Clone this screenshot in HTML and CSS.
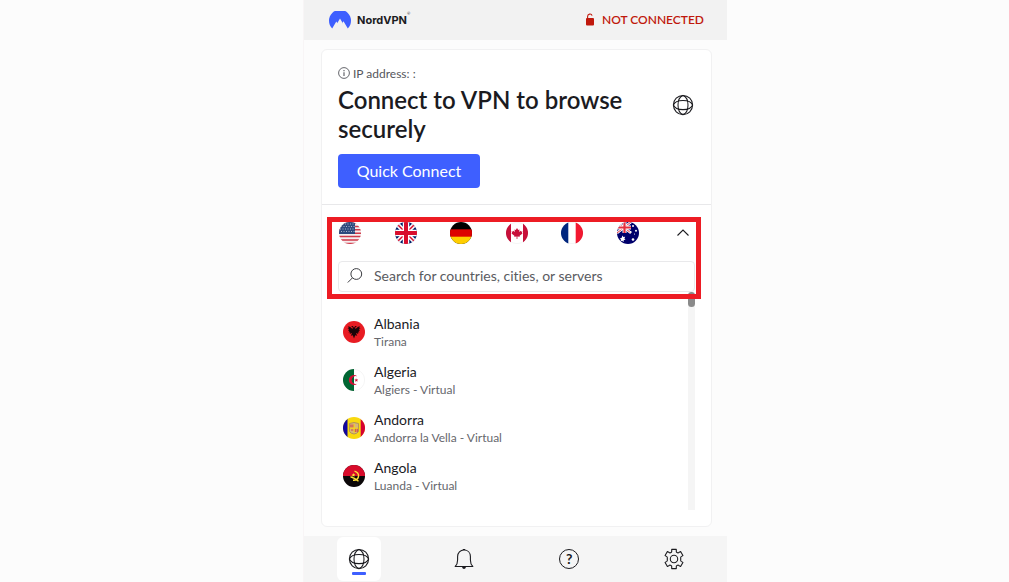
FILE: index.html
```html
<!DOCTYPE html>
<html lang="en">
<head>
<meta charset="utf-8">
<meta name="viewport" content="width=device-width, initial-scale=1">
<title>NordVPN</title>
<link rel="stylesheet" href="styles.css">
</head>
<body>
<svg class="defs" width="0" height="0" aria-hidden="true">
  <defs>
    <clipPath id="round"><circle cx="11" cy="11" r="11"/></clipPath>
    <symbol id="globe" viewBox="0 0 22 22">
      <g fill="none" stroke="currentColor" stroke-width="1.050">
        <circle cx="11" cy="11" r="9.600"/>
        <path d="M11 1.400C8 2.500 6 6.500 6 11S8 19.500 11 20.600C14 19.500 16 15.500 16 11S14 2.500 11 1.400Z"/>
        <path d="M1.400 11C2.500 8 6.500 6.400 11 6.400S19.500 8 20.600 11C19.500 14 15.500 15.600 11 15.600S2.500 14 1.400 11Z"/>
      </g>
    </symbol>
  </defs>
</svg>
<div class="app">
  <header class="topbar">
    <div class="brand">
      <svg class="brand-mark" viewBox="0 0 22 18" aria-hidden="true"><path fill="#3e5fff" d="M3.200 17.500A11 11 0 1 1 18.800 17.500L14.500 10.300L13.700 11.600L14.100 12.800L11 7.400L8.400 11.900L8.800 12.700L7.300 10.400Z"/></svg>
      <span class="brand-name">NordVPN</span><span class="brand-reg">®</span>
    </div>
    <div class="status">
      <svg class="lock" viewBox="0 0 10 13" aria-hidden="true"><path d="M2.600 6V3.400a2.300 2.300 0 0 1 4.500-.7" fill="none" stroke="currentColor" stroke-width="1.100"/><rect x="1" y="5" width="8" height="7.500" rx="1" fill="currentColor"/></svg>
      <span>NOT CONNECTED</span>
    </div>
  </header>

  <main class="card">
    <section class="connect">
      <p class="ip">
        <svg class="info" viewBox="0 0 12 12" aria-hidden="true"><circle cx="6" cy="6" r="5.400" fill="none" stroke="currentColor" stroke-width=".9"/><path d="M6 5.200V9M6 3v1.200" stroke="currentColor" stroke-width="1.100"/></svg>
        <span>IP address: :</span>
      </p>
      <div class="headline">
        <h1>Connect to VPN to browse securely</h1>
        <svg class="globe"><use href="#globe"/></svg>
      </div>
      <button class="quick" type="button">Quick Connect</button>
    </section>

    <section class="picker">
      <div class="flags">
        <button class="flag-button" type="button" aria-label="United States">
          <svg class="flag" viewBox="0 0 22 22"><g clip-path="url(#round)"><rect width="22" height="22" fill="#f5eeee"/><path stroke="#d0394a" stroke-width="1.500" d="M0 1h22M0 4.400h22M0 7.800h22M0 11.200h22M0 14.600h22M0 18h22M0 21.400h22"/><rect width="16" height="12" fill="#2e4a7d"/><path stroke="#a9b5cd" stroke-width="1" stroke-dasharray="1 1.500" d="M1 2h15M2 4.500h14M1 7h15M2 9.500h14"/></g></svg>
        </button>
        <button class="flag-button" type="button" aria-label="United Kingdom">
          <svg class="flag" viewBox="0 0 22 22"><g clip-path="url(#round)"><rect width="22" height="22" fill="#012169"/><path stroke="#fff" stroke-width="4.500" d="M0 0 22 22M22 0 0 22"/><path stroke="#d80d2c" stroke-width="1.500" d="M0 0 22 22M22 0 0 22"/><path stroke="#fff" stroke-width="6.500" d="M11 0v22M0 11h22"/><path stroke="#d80d2c" stroke-width="4" d="M11 0v22M0 11h22"/></g></svg>
        </button>
        <button class="flag-button" type="button" aria-label="Germany">
          <svg class="flag" viewBox="0 0 22 22"><g clip-path="url(#round)"><rect width="22" height="22" fill="#000"/><rect y="7.300" width="22" height="8" fill="#dd0000"/><rect y="14.700" width="22" height="8" fill="#ffce00"/></g></svg>
        </button>
        <button class="flag-button" type="button" aria-label="Canada">
          <svg class="flag" viewBox="0 0 22 22"><g clip-path="url(#round)"><rect width="22" height="22" fill="#fff"/><path fill="#c8103a" d="M0 0h5v22H0zM17 0h5v22h-5zM11 6l1.200 2 1.300-.6-.4 2.600 1.500-1.300.4.900 1.500-.2-.6 1.600.7.500-3 2.300.2 1-2.400-.3V17h-.8v-2.500l-2.400.3.200-1-3-2.300.7-.5-.6-1.600 1.500.2.400-.9L8.900 10l-.4-2.600 1.300.6z"/></g><circle cx="11" cy="11" r="10.700" fill="none" stroke="#000" stroke-opacity=".08" stroke-width=".6"/></svg>
        </button>
        <button class="flag-button" type="button" aria-label="France">
          <svg class="flag" viewBox="0 0 22 22"><g clip-path="url(#round)"><rect width="22" height="22" fill="#fff"/><rect width="7.300" height="22" fill="#00267f"/><rect x="14.700" width="7.300" height="22" fill="#f31830"/></g><circle cx="11" cy="11" r="10.700" fill="none" stroke="#000" stroke-opacity=".08" stroke-width=".6"/></svg>
        </button>
        <button class="flag-button" type="button" aria-label="Australia">
          <svg class="flag" viewBox="0 0 22 22"><g clip-path="url(#round)"><rect width="22" height="22" fill="#00006b"/><path stroke="#fff" stroke-width="2.600" d="M0 0 14 11M14 0 0 11"/><path stroke="#e4303f" stroke-width="1" d="M0 0 14 11M14 0 0 11"/><path stroke="#fff" stroke-width="4" d="M7.500 0v11M0 5.500h14"/><path stroke="#e4303f" stroke-width="2.200" d="M7.500 0v11M0 5.500h14"/><g fill="#fff"><path d="m5.500 13.500.9 1.600 1.800-.3-.8 1.600 1.100 1.400-1.700.3-.3 1.800-1.300-1.200-1.700.6.500-1.700-1.300-1.200 1.800-.4z"/><circle cx="16" cy="4" r="1"/><circle cx="13.500" cy="10" r=".9"/><circle cx="19" cy="8.700" r="1"/><circle cx="16" cy="17.500" r="1.300"/><circle cx="17.500" cy="12" r=".6"/></g></g></svg>
        </button>
        <button class="collapse" type="button" aria-label="Collapse">
          <svg viewBox="0 0 14 8"><path d="m1.500 6.500 5.500-5.500L12.500 6.500" fill="none" stroke="currentColor" stroke-width="1.100"/></svg>
        </button>
      </div>

      <label class="search">
        <svg class="magnifier" viewBox="0 0 16 16" aria-hidden="true"><circle cx="9.300" cy="6" r="5.400" fill="none" stroke="currentColor" stroke-width="1"/><path d="M5.500 9.800.8 14.500" stroke="currentColor" stroke-width="1"/></svg>
        <input type="text" placeholder="Search for countries, cities, or servers" aria-label="Search for countries, cities, or servers">
      </label>
      <div class="highlight"></div>

      <div class="results">
        <ul class="countries">
          <li class="country">
            <svg class="flag" viewBox="0 0 22 22" aria-hidden="true"><g clip-path="url(#round)"><rect width="22" height="22" fill="#e81c23"/><path fill="#190508" d="M11 6.800 9.800 5 8 5.300l1.800 1.200L9.500 8 7 5.800 4.800 5.600l1.200 1.600-1.500.4 1.700 1.100-1.400.8 1.800.6-1.200 1.200 1.900.1-.7 1.600 2.500-1-1.300 2.700 2-.4L11 17.500l1.200-3.200 2 .4-1.300-2.700 2.500 1-.7-1.600 1.900-.1-1.200-1.200 1.800-.6-1.400-.8 1.700-1.100-1.500-.4 1.200-1.600-2.200.2L12.500 8l-.3-1.500L14 5.300 12.200 5z"/></g></svg>
            <div><div class="name">Albania</div><div class="place">Tirana</div></div>
          </li>
          <li class="country">
            <svg class="flag" viewBox="0 0 22 22" aria-hidden="true"><g clip-path="url(#round)"><rect width="22" height="22" fill="#fff"/><rect width="11" height="22" fill="#006633"/><path fill="#d21034" d="M14.200 7.300a5 5 0 1 0 0 7.400 4 4 0 1 1 0-7.400ZM13 9.200l.6 1.200 1.500-.1-.9 1 .7 1.300-1.400-.5-1.100.9.100-1.400-1.200-.8 1.400-.3z"/></g><circle cx="11" cy="11" r="10.700" fill="none" stroke="#000" stroke-opacity=".08" stroke-width=".6"/></svg>
            <div><div class="name">Algeria</div><div class="place">Algiers - Virtual</div></div>
          </li>
          <li class="country">
            <svg class="flag" viewBox="0 0 22 22" aria-hidden="true"><g clip-path="url(#round)"><rect width="22" height="22" fill="#f9d90f"/><rect width="4.500" height="22" fill="#10069f"/><rect x="17.700" width="4.500" height="22" fill="#d50032"/><path fill="#d7b57c" stroke="#a68a55" stroke-width=".8" d="M6.500 6.500q4.500-2 9 0v8q-1 2-4.500 2.500-3.500-.5-4.500-2.500z"/><path stroke="#d34842" stroke-width="1.200" d="M8 7.500v3M10 7.500v3M12.200 11.500V15M14.200 11.500V15M8 13h2.500"/><path stroke="#f9d90f" d="M11.100 7v9M7 11.200h8"/></g></svg>
            <div><div class="name">Andorra</div><div class="place">Andorra la Vella - Virtual</div></div>
          </li>
          <li class="country">
            <svg class="flag" viewBox="0 0 22 22" aria-hidden="true"><g clip-path="url(#round)"><rect width="22" height="22" fill="#0b0708"/><rect width="22" height="11" fill="#d80b2b"/><path d="M11.500 6.200q4.500 1.300 4 5.300-1 4.200-5.500 3.700M7.500 11.700q4 1 8 4.500" fill="none" stroke="#ffdf36" stroke-width="1.400"/><path fill="#ffdf36" d="m10.200 8 .6 1.200 1.300-.1-.8 1.100.6 1.200-1.300-.3-1 .8v-1.300L8.500 10l1.200-.4z"/></g></svg>
            <div><div class="name">Angola</div><div class="place">Luanda - Virtual</div></div>
          </li>
        </ul>
        <div class="track"><div class="thumb"></div></div>
      </div>
    </section>
  </main>

  <nav class="tabs">
    <button class="tab tab-active" type="button" aria-label="Locations"><svg><use href="#globe"/></svg></button>
    <button class="tab" type="button" aria-label="Notifications"><svg viewBox="0 0 22 22"><path fill="none" stroke="currentColor" stroke-width="1.100" stroke-linejoin="round" d="M2.200 18.500c1.800-1.700 2.400-3.600 2.400-6.500V8.500C4.600 4.600 7.300 2 11 2s6.400 2.600 6.400 6.500V12c0 2.900.6 4.800 2.400 6.500z"/><path fill="currentColor" d="M9 19h4q-.5 2-2 2t-2-2ZM9.800 1h2.400v1H9.800z"/></svg></button>
    <button class="tab" type="button" aria-label="Help"><span class="help">?</span></button>
    <button class="tab" type="button" aria-label="Settings"><svg viewBox="0 0 22 22"><g fill="none" stroke="currentColor" stroke-width="1.100" stroke-linejoin="round"><path d="M8.700 1.400h4.600v2q0 .7.700 1l.6.300q.7.300 1.200-.1l1.800-1 2.300 4-1.700 1q-.6.400-.5 1v2.800q-.1.600.5 1l1.700 1-2.300 4-1.800-1q-.5-.4-1.200-.1l-.6.300q-.7.300-.7 1v2H8.700v-2q0-.7-.7-1l-.6-.3q-.7-.3-1.200.1l-1.800 1-2.300-4 1.700-1q.6-.4.500-1V9.600q.1-.6-.5-1l-1.700-1 2.300-4 1.800 1q.5.400 1.200.1L8 4.400q.7-.3.700-1z"/><circle cx="11" cy="11" r="3.700"/></g></svg></button>
  </nav>
</div>
</body>
</html>
```
FILE: styles.css
```css
* {
  box-sizing: border-box;
}

body {
  margin: 0;
  min-height: 100vh;
  display: grid;
  grid-template-columns: minmax(0, 304fr) minmax(0, 423px) minmax(0, 282fr);
  background: #fcfcfc;
  color: #1b1b1f;
  font-family: Lato, "Open Sans", sans-serif;
  font-variant-ligatures: none;
}

button {
  border: 0;
  padding: 0;
  background: none;
  color: inherit;
  font: inherit;
}

h1, p, ul {
  margin: 0;
  padding: 0;
}

svg {
  display: block;
  flex: none;
}

.defs {
  position: absolute;
}

.app {
  grid-column: 2;
  display: flex;
  flex-direction: column;
  box-shadow: -1px 0 #f8f5f6;
}

.topbar {
  height: 40px;
  padding: 0 23px 0 25px;
  display: flex;
  align-items: center;
  justify-content: space-between;
  background: #f2f2f2;
}

.brand {
  display: flex;
  align-items: center;
}

.brand-mark {
  width: 22px;
  height: 18px;
  margin-right: 6px;
}

.brand-name {
  font-family: Inter, sans-serif;
  font-size: 11px;
  font-weight: 700;
}

.brand-reg {
  align-self: flex-start;
  font-size: 4px;
}

.status {
  display: flex;
  align-items: center;
  gap: 7px;
  padding-bottom: 2px;
  color: #c0180c;
  font-size: 12px;
  font-weight: 600;
}

.lock {
  width: 10px;
  height: 13px;
}

.card {
  flex: 1;
  display: flex;
  flex-direction: column;
  margin: 9px 15px 9px 17px;
  border: 1px solid #f1f1f2;
  border-radius: 6px;
  background: #fff;
}

.connect {
  padding: 15px 16px 16px;
  border-bottom: 1px solid #e8e8ea;
}

.ip {
  display: flex;
  align-items: center;
  gap: 3px;
  height: 16px;
  margin-bottom: 4px;
  color: #55565c;
  font-size: 12px;
}

.info {
  width: 12px;
  height: 12px;
}

.headline {
  display: flex;
  align-items: flex-start;
  justify-content: space-between;
  margin-bottom: 11px;
}

h1 {
  max-width: 310px;
  font-size: 24px;
  font-weight: 600;
  line-height: 29px;
}

.globe {
  width: 22px;
  height: 22px;
  margin: 9px 1px 0 0;
}

.quick {
  width: 142px;
  height: 34px;
  padding-bottom: 2px;
  border-radius: 4px;
  background: #3e5fff;
  color: #fff;
  font-size: 16px;
}

.picker {
  position: relative;
  flex: 1;
  display: flex;
  flex-direction: column;
  padding: 17px 16px 16px;
}

.flags {
  display: flex;
  align-items: center;
  justify-content: space-between;
  padding: 0 5px 0 1px;
  margin-bottom: 17px;
}

.flag {
  width: 22px;
  height: 22px;
}

.collapse {
  width: 14px;
  margin-left: 4px;
}

.search {
  display: flex;
  align-items: center;
  gap: 11px;
  height: 31px;
  padding: 0 8px 2px;
  border: 1px solid #e9e9eb;
  border-radius: 4px;
  color: #3c3d42;
}

.magnifier {
  width: 16px;
  height: 16px;
}

.search input {
  flex: 1;
  min-width: 0;
  border: 0;
  padding: 0;
  outline: 0;
  background: none;
  color: #1b1b1f;
  font: 14px Lato, "Open Sans", sans-serif;
  font-variant-ligatures: none;
}

.search input::placeholder {
  color: #5a5b61;
  opacity: 1;
}

.highlight {
  position: absolute;
  top: 12px;
  left: 5px;
  right: 10px;
  height: 82px;
  border: 5px solid #ed1c24;
  pointer-events: none;
}

.results {
  flex: 1;
  display: flex;
  justify-content: space-between;
}

.countries {
  padding: 16px 0 8px 5px;
  list-style: none;
}

.country {
  display: flex;
  align-items: center;
  gap: 9px;
  height: 48px;
}

.name {
  font-size: 14px;
  line-height: 18px;
}

.place {
  color: #66676d;
  font-size: 12px;
  line-height: 17px;
}

.track {
  width: 7px;
  background: #f5f5f5;
}

.thumb {
  height: 15px;
  border-radius: 4px;
  background: #8a8a8a;
}

.tabs {
  display: grid;
  grid-template-columns: repeat(4, 1fr);
  justify-items: center;
  height: 46px;
  padding: 1px 0 1px 2px;
  background: #f5f5f5;
}

.tab {
  width: 44px;
  height: 44px;
  display: flex;
  flex-direction: column;
  align-items: center;
  justify-content: center;
  border-radius: 6px;
}

.tab svg {
  width: 22px;
  height: 22px;
}

.tab-active {
  justify-content: flex-start;
  padding-top: 11px;
  background: #fff;
}

.tab-active::after {
  content: "";
  width: 14px;
  height: 3px;
  margin-top: 2px;
  border-radius: 1px;
  background: #3e5fff;
}

.help {
  width: 20px;
  height: 20px;
  border: 1px solid currentColor;
  border-radius: 50%;
  font-size: 14px;
  font-weight: 700;
  line-height: 17px;
}
```
